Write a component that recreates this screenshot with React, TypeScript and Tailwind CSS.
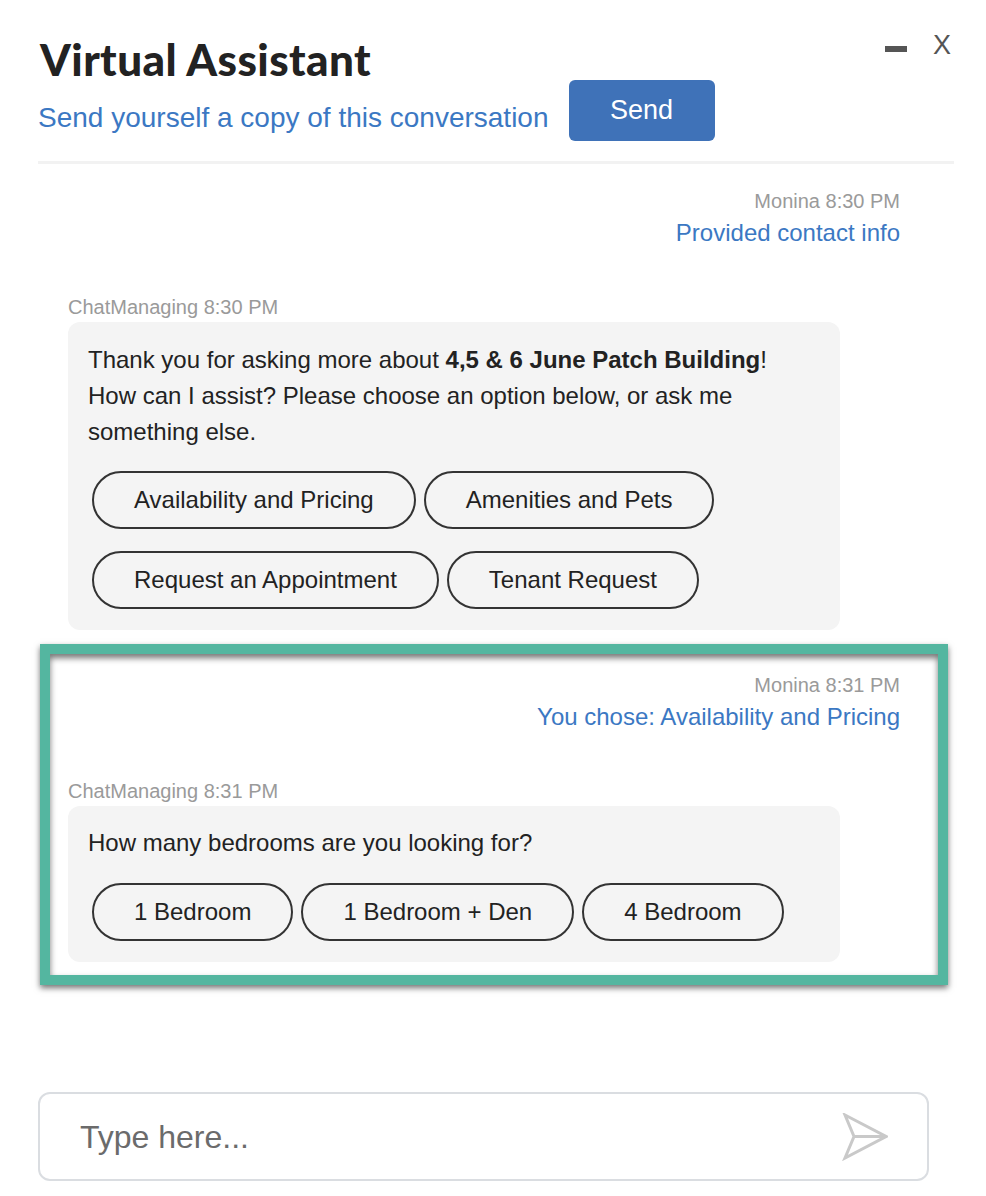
import React from "react";

function Pill({ label }: { label: string }) {
  return (
    <div className="h-[58px] px-[40px] border-2 border-[#333] rounded-full flex items-center text-[24px] text-[#222] whitespace-nowrap">
      {label}
    </div>
  );
}

function Meta({ text, right }: { text: string; right?: boolean }) {
  return (
    <div className={`text-[20px] leading-[24px] text-[#9a9a9a] ${right ? "text-right" : ""}`}>{text}</div>
  );
}

function PlaneIcon() {
  return (
    <svg width="46" height="48" viewBox="0 0 46 48" fill="none" stroke="#c9c9c9" strokeWidth="3" strokeLinejoin="miter">
      <path d="M3 2 L44 23.5 L3 45 L12 23.5 Z" />
      <path d="M12 23.5 H44" />
    </svg>
  );
}

export default function App() {
  return (
    <div className="w-[986px] h-[1196px] bg-white flex flex-col font-['Liberation_Sans',Arial,sans-serif] overflow-hidden">
      {/* Header */}
      <div className="relative pl-[40px] pt-[38px]">
        <div className="font-['Lato',sans-serif] font-black text-[44px] leading-[42px] text-[#222] tracking-[0.4px]">
          Virtual Assistant
        </div>
        <div className="-ml-[2px] flex items-start gap-[20px]">
          <div className="mt-[22px] text-[28px] leading-[32px] text-[#3b78c3] whitespace-nowrap">
            Send yourself a copy of this conversation
          </div>
          <div className="w-[146px] h-[61px] rounded-[6px] bg-[#3f72b8] text-white text-[27px] flex items-center justify-center">
            Send
          </div>
        </div>
        <div className="absolute top-[34px] right-[35px] flex items-start gap-[26px]">
          <div className="mt-[12px] w-[22px] h-[6px] bg-[#555]" />
          <div className="text-[27px] leading-[22px] text-[#555]">X</div>
        </div>
      </div>
      <div className="mt-[20px] ml-[38px] mr-[32px] h-[3px] bg-[#f2f2f2]" />

      {/* Exchange 1 */}
      <div className="pl-[68px] pr-[86px] pt-[25px]">
        <Meta text="Monina 8:30 PM" right />
        <div className="mt-[6px] text-right text-[24px] leading-[28px] text-[#3b78c3]">Provided contact info</div>
        <div className="mt-[48px]">
          <Meta text="ChatManaging 8:30 PM" />
        </div>
        <div className="mt-[3px] w-[772px] rounded-[12px] bg-[#f4f4f4] pt-[20px] px-[20px] pb-[21px]">
          <div className="text-[24px] leading-[36px] text-[#222]">
            <div>
              Thank you for asking more about <span className="font-bold">4,5 &amp; 6 June Patch Building</span>!
            </div>
            <div>How can I assist? Please choose an option below, or ask me</div>
            <div>something else.</div>
          </div>
          <div className="mt-[21px] pl-[4px] flex flex-wrap gap-x-[8px] gap-y-[22px] w-[640px]">
            <Pill label="Availability and Pricing" />
            <Pill label="Amenities and Pets" />
            <Pill label="Request an Appointment" />
            <Pill label="Tenant Request" />
          </div>
        </div>
      </div>

      {/* Highlighted exchange */}
      <div className="mt-[14px] ml-[40px] w-[908px] border-[10px] border-[#54b6a0] pl-[18px] pr-[38px] pt-[19px] pb-[13px] shadow-[0_3px_6px_rgba(0,0,0,0.55),inset_0_4px_6px_rgba(0,0,0,0.55)]">
        <Meta text="Monina 8:31 PM" right />
        <div className="mt-[6px] text-right text-[24px] leading-[28px] text-[#3b78c3]">You chose: Availability and Pricing</div>
        <div className="mt-[48px]">
          <Meta text="ChatManaging 8:31 PM" />
        </div>
        <div className="mt-[3px] w-[772px] rounded-[12px] bg-[#f4f4f4] pt-[19px] px-[20px] pb-[21px]">
          <div className="text-[24px] leading-[36px] text-[#222]">How many bedrooms are you looking for?</div>
          <div className="mt-[22px] pl-[4px] flex gap-[8px]">
            <Pill label="1 Bedroom" />
            <Pill label="1 Bedroom + Den" />
            <Pill label="4 Bedroom" />
          </div>
        </div>
      </div>

      {/* Input */}
      <div className="mt-auto mb-[15px] ml-[38px] w-[891px] h-[89px] border-2 border-[#dadde1] rounded-[12px] flex items-center justify-between pl-[40px] pr-[39px]">
        <div className="text-[32px] text-[#6b6b6b]">Type here...</div>
        <PlaneIcon />
      </div>
    </div>
  );
}
